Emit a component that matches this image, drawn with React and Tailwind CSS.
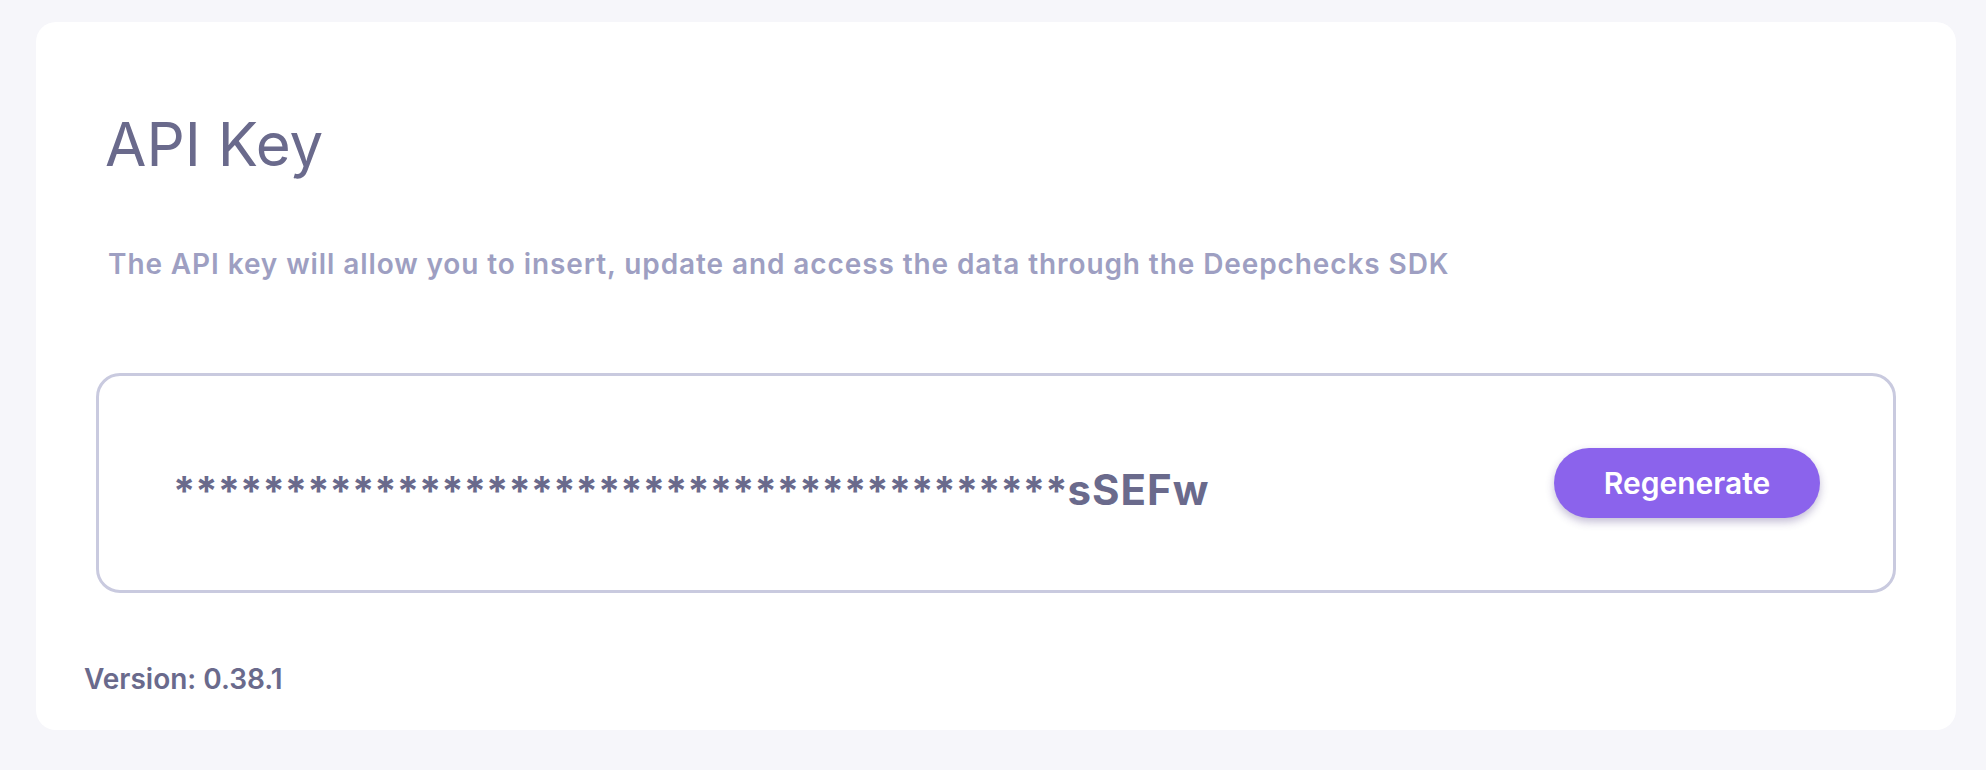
export default function App() {
    const stars = '*'.repeat(40)

    return (
        <div className="min-h-screen bg-[#f6f6fa] pt-[22px] pl-[36px] font-['Inter','Liberation_Sans',sans-serif]">
            {/* Card */}
            <div className="w-[1920px] h-[708px] bg-white rounded-[20px] flex flex-col">
                <h1 className="mt-[86px] ml-[69px] text-[60px] leading-[72px] font-normal text-[#6a6a8c]">
                    API Key
                </h1>

                <p className="mt-[67px] ml-[72px] text-[28px] leading-[34px] font-semibold tracking-[0.9px] text-[#9e9fc2]">
                    The API key will allow you to insert, update and access the data through the Deepchecks SDK
                </p>

                {/* Key box */}
                <div className="mt-[92px] mx-[60px] h-[220px] border-[3px] border-[#c9cadf] rounded-[24px] flex items-center justify-between pl-[74px] pr-[73px]">
                    <span className="pt-[14px] text-[40px] leading-[48px] font-bold text-[#6a6a8c]">
                        {stars}
                        <span className="text-[42px] tracking-[1px]">sSEFw</span>
                    </span>
                    <button className="w-[266px] h-[70px] rounded-full bg-[#8b63ec] text-white text-[30px] font-semibold shadow-[0_4px_8px_rgba(60,40,120,0.3)]">
                        Regenerate
                    </button>
                </div>

                <div className="mt-[69px] ml-[48px] text-[28px] leading-[34px] font-semibold text-[#6a6a8c]">
                    Version: 0.38.1
                </div>
            </div>
        </div>
    )
}
